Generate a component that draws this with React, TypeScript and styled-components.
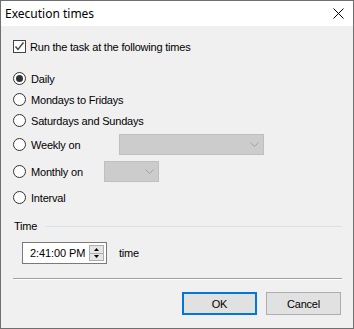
import React from "react";
import styled, { createGlobalStyle } from "styled-components";

const Global = createGlobalStyle`
  html, body { margin: 0; padding: 0; background: #f0f0f0; }
  * { box-sizing: border-box; }
`;

const Window = styled.div`
  width: 354px;
  height: 329px;
  border: 1px solid #6f6f6f;
  background: #f0f0f0;
  display: flex;
  flex-direction: column;
  font-family: "Liberation Sans", Arial, sans-serif;
  font-size: 11px;
  letter-spacing: -0.2px;
  color: #000;
`;

const TitleBar = styled.div`
  height: 25px;
  background: #fff;
  display: flex;
  align-items: center;
  justify-content: space-between;
  padding: 0 9px 0 4px;
  font-family: "Noto Sans", "Open Sans", sans-serif;
  font-size: 12px;
  letter-spacing: 0;
`;

const Body = styled.div`
  flex: 1;
  display: flex;
  flex-direction: column;
  padding: 10px 11px 0 12px;
`;

const Row = styled.label<{ $mt?: number }>`
  height: 21px;
  margin-top: ${(p) => p.$mt ?? 0}px;
  display: flex;
  align-items: center;
`;

const CheckBox = styled.span`
  width: 13px;
  height: 13px;
  border: 1px solid #444;
  background: #fff;
  display: flex;
  align-items: center;
  justify-content: center;
  margin-right: 4px;
`;

const Radio = styled.span<{ $on?: boolean }>`
  width: 13px;
  height: 13px;
  border-radius: 50%;
  border: 1px solid #333;
  background: #fff;
  display: flex;
  align-items: center;
  justify-content: center;
  margin-right: 5px;
  &::after {
    content: "";
    width: 7px;
    height: 7px;
    border-radius: 50%;
    background: ${(p) => (p.$on ? "#333" : "transparent")};
  }
`;

const Label = styled.span<{ $w?: number }>`
  width: ${(p) => (p.$w ? `${p.$w}px` : "auto")};
`;

const Select = styled.div<{ $w: number }>`
  width: ${(p) => p.$w}px;
  height: 21px;
  background: #cccccc;
  border: 1px solid #bfbfbf;
  display: flex;
  align-items: center;
  justify-content: flex-end;
  padding-right: 4px;
`;

const TimeHeader = styled.div`
  margin-top: 11px;
  height: 14px;
  display: flex;
  align-items: center;
  gap: 8px;
  padding-left: 1px;
  &::after {
    content: "";
    flex: 1;
    height: 1px;
    background: #dae1e8;
  }
`;

const TimeRow = styled.div`
  margin-top: 9px;
  height: 22px;
  display: flex;
  align-items: center;
  padding-left: 9px;
  gap: 12px;
`;

const SpinBox = styled.div`
  width: 85px;
  height: 22px;
  border: 1px solid #7a7a7a;
  background: #fff;
  display: flex;
  align-items: center;
  justify-content: space-between;
  padding: 0 2px 0 7px;
  font-size: 11px;
  letter-spacing: -0.1px;
`;

const SpinButtons = styled.div`
  display: flex;
  flex-direction: column;
  width: 15px;
  height: 16px;
`;

const SpinBtn = styled.div`
  flex: 1;
  background: #e5e5e5;
  border: 1px solid #adadad;
  display: flex;
  align-items: center;
  justify-content: center;
  & + & { border-top: none; }
`;

const Separator = styled.div`
  margin-top: 14px;
  height: 2px;
  border-top: 1px solid #a0a0a0;
  border-bottom: 1px solid #fff;
`;

const ButtonBar = styled.div`
  margin-top: 12px;
  display: flex;
  justify-content: flex-end;
  gap: 9px;
  padding-right: 1px;
`;

const Button = styled.button<{ $default?: boolean }>`
  width: 75px;
  height: 23px;
  background: #e1e1e1;
  border: ${(p) => (p.$default ? "2px solid #0078d7" : "1px solid #adadad")};
  font-family: "Liberation Sans", Arial, sans-serif;
  font-size: 11px;
  letter-spacing: -0.2px;
  color: #000;
  padding: 0;
`;

const Chevron = () => (
  <svg width="9" height="5" viewBox="0 0 9 5">
    <path d="M0.5 0.5 L4.5 4.5 L8.5 0.5" fill="none" stroke="#a0a0a0" strokeWidth="1" />
  </svg>
);

export default function App() {
  return (
    <>
      <Global />
      <Window>
        <TitleBar>
          <span>Execution times</span>
          <svg width="11" height="11" viewBox="0 0 11 11">
            <path d="M0.5 0.5 L10.5 10.5 M10.5 0.5 L0.5 10.5" stroke="#000" strokeWidth="1" />
          </svg>
        </TitleBar>
        <Body>
          <Row>
            <CheckBox>
              <svg width="11" height="11" viewBox="0 0 11 11">
                <path d="M1.5 5.5 L4 8.5 L9.5 1.5" fill="none" stroke="#444" strokeWidth="1.4" />
              </svg>
            </CheckBox>
            <span>Run the task at the following times</span>
          </Row>
          <Row $mt={11}>
            <Radio $on />
            <span>Daily</span>
          </Row>
          <Row>
            <Radio />
            <span>Mondays to Fridays</span>
          </Row>
          <Row>
            <Radio />
            <span>Saturdays and Sundays</span>
          </Row>
          <Row $mt={3}>
            <Radio />
            <Label $w={88}>Weekly on</Label>
            <Select $w={145}>
              <Chevron />
            </Select>
          </Row>
          <Row $mt={6}>
            <Radio />
            <Label $w={73}>Monthly on</Label>
            <Select $w={55}>
              <Chevron />
            </Select>
          </Row>
          <Row $mt={5}>
            <Radio />
            <span>Interval</span>
          </Row>
          <TimeHeader>Time</TimeHeader>
          <TimeRow>
            <SpinBox>
              <span>2:41:00 PM</span>
              <SpinButtons>
                <SpinBtn>
                  <svg width="5" height="3" viewBox="0 0 5 3">
                    <path d="M0 3 L2.5 0 L5 3 Z" fill="#000" />
                  </svg>
                </SpinBtn>
                <SpinBtn>
                  <svg width="5" height="3" viewBox="0 0 5 3">
                    <path d="M0 0 L2.5 3 L5 0 Z" fill="#000" />
                  </svg>
                </SpinBtn>
              </SpinButtons>
            </SpinBox>
            <span>time</span>
          </TimeRow>
          <Separator />
          <ButtonBar>
            <Button $default>OK</Button>
            <Button>Cancel</Button>
          </ButtonBar>
        </Body>
      </Window>
    </>
  );
}
